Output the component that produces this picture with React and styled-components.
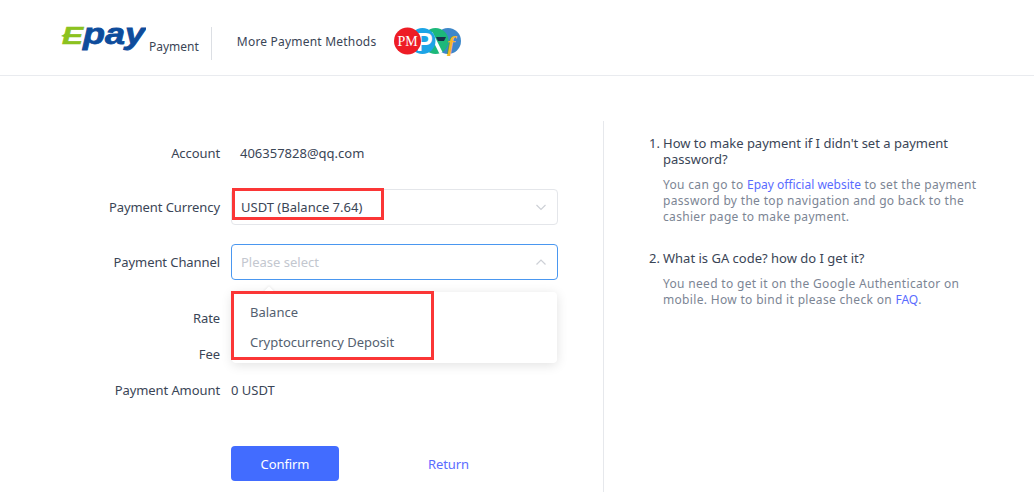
import React from "react";
import styled, { createGlobalStyle } from "styled-components";

const GlobalStyle = createGlobalStyle`
  html, body {
    margin: 0;
    padding: 0;
    background: #fff;
    font-family: "Noto Sans", "Open Sans", sans-serif;
    font-size: 13px;
    overflow: hidden;
  }
`;

const Page = styled.div`
  position: relative;
  width: 1034px;
  height: 492px;
  overflow: hidden;
  color: #3a4556;
`;

const Header = styled.header`
  height: 75px;
  border-bottom: 1px solid #e9ebef;
  display: flex;
  align-items: center;
  padding-left: 60px;
`;

const Brand = styled.div`
  display: flex;
  align-items: flex-end;
  height: 33px;
  margin-top: 12px;
  padding-right: 12px;
  padding-bottom: 5px;
  box-sizing: border-box;
  border-right: 1px solid #dcdfe4;
`;

const LogoSvg = styled.svg`
  display: block;
  align-self: flex-start;
  margin-top: -12px;
`;

const BrandName = styled.span`
  font-size: 12px;
  line-height: 16px;
  margin-left: 3px;
  color: #3a4556;
`;

const MoreMethods = styled.span`
  margin: 7px 0 0 25px;
  font-size: 12px;
  letter-spacing: 0.2px;
  color: #3a4556;
`;

const MethodIcons = styled.svg`
  margin: 6px 0 0 18px;
  display: block;
`;

const Main = styled.main`
  display: flex;
  padding-top: 45px;
`;

const FormColumn = styled.section`
  width: 604px;
  height: 371px;
  box-sizing: border-box;
  border-right: 1px solid #e6e8ec;
  padding-top: 14px;
`;

const Row = styled.div`
  display: flex;
  align-items: center;
  height: ${(p) => p.$height || 36}px;
  margin-bottom: ${(p) => p.$gap || 0}px;
`;

const Label = styled.span`
  width: 220px;
  text-align: right;
  flex-shrink: 0;
  letter-spacing: -0.08px;
`;

const Value = styled.span`
  margin-left: ${(p) => p.$inset}px;
`;

const Field = styled.div`
  position: relative;
  width: 327px;
  height: 36px;
  margin-left: 11px;
  box-sizing: border-box;
  border: 1px solid ${(p) => (p.$open ? "#4a97f0" : "#e4e6ea")};
  border-radius: 4px;
  display: flex;
  align-items: center;
  justify-content: space-between;
  padding: 0 9px;
  color: ${(p) => (p.$placeholder ? "#c3c7cf" : "#3a4556")};
`;

const Menu = styled.div`
  position: absolute;
  top: 47px;
  left: 0;
  width: 325px;
  height: 71px;
  background: #fff;
  border-radius: 4px;
  box-shadow: 0 2px 12px rgba(0, 0, 0, 0.12);
  padding: 5px 0;
  box-sizing: border-box;
  z-index: 2;

  &::before {
    content: "";
    position: absolute;
    top: -4px;
    left: 33px;
    width: 8px;
    height: 8px;
    background: #fff;
    transform: rotate(45deg);
    box-shadow: -1px -1px 2px rgba(0, 0, 0, 0.06);
  }
`;

const MenuItem = styled.div`
  position: relative;
  height: 30px;
  line-height: 30px;
  padding-left: 18px;
  color: #545f70;
`;

const Actions = styled.div`
  display: flex;
  align-items: center;
  margin: 38px 0 0 231px;
`;

const ConfirmButton = styled.button`
  width: 108px;
  height: 35px;
  border: none;
  border-radius: 4px;
  background: #426cff;
  color: #fff;
  font: inherit;
  letter-spacing: -0.1px;
`;

const ReturnLink = styled.a`
  margin-left: 89px;
  color: #5a6cff;
  letter-spacing: -0.1px;
`;

const Faq = styled.ol`
  margin: 0;
  padding: 14px 0 0 59px;
  width: 322px;
  box-sizing: content-box;
  list-style: none;
`;

const FaqItem = styled.li`
  position: relative;
  margin-bottom: 25px;
`;

const ItemNumber = styled.span`
  position: absolute;
  left: -14px;
  top: 0;
  line-height: 16px;
  color: #3a4556;
`;

const Question = styled.div`
  line-height: 16px;
  color: #3a4556;
`;

const Answer = styled.p`
  margin: 10px 0 0;
  line-height: 16px;
  font-size: 12px;
  letter-spacing: 0.32px;
  color: #7c8594;
`;

const Link = styled.a`
  color: #5a6cff;
  letter-spacing: 0;
`;

const Highlight = styled.div`
  position: absolute;
  left: ${(p) => p.$x}px;
  top: ${(p) => p.$y}px;
  width: ${(p) => p.$w}px;
  height: ${(p) => p.$h}px;
  box-sizing: border-box;
  border: 3px solid #fb3636;
  z-index: 3;
`;

function EpayLogo() {
  return (
    <LogoSvg width="86" height="40" viewBox="0 0 86 40">
      <polygon points="1,21 8,17 7,23" fill="#8cc21f" />
      <text
        x="2"
        y="29"
        fontFamily="Liberation Sans"
        fontWeight="700"
        fontStyle="italic"
        fontSize="23"
        textLength="21"
        lengthAdjust="spacingAndGlyphs"
        fill="#8cc21f"
        stroke="#8cc21f"
        strokeWidth="0.6"
      >
        E
      </text>
      <text
        x="23"
        y="29"
        fontFamily="Liberation Sans"
        fontWeight="700"
        fontStyle="italic"
        fontSize="30"
        textLength="62"
        lengthAdjust="spacingAndGlyphs"
        fill="#0e4c9c"
        stroke="#0e4c9c"
        strokeWidth="0.8"
      >
        pay
      </text>
    </LogoSvg>
  );
}

function Methods() {
  return (
    <MethodIcons width="68" height="30" viewBox="0 0 68 30">
      <circle cx="54" cy="15" r="13" fill="#3d87c9" />
      <circle cx="41.5" cy="15" r="13" fill="#1cb87a" />
      <path d="M37 7 L47 27" stroke="#fff" strokeWidth="3.5" fill="none" />
      <path d="M42 11 H52 L50 15 H44 Z" fill="#16324a" />
      <text x="53" y="26" fontFamily="Liberation Serif" fontWeight="700" fontStyle="italic" fontSize="24" fill="#f4b82a">
        f
      </text>
      <circle cx="28.5" cy="15" r="13" fill="#1ca4e6" />
      <text x="22" y="25" fontFamily="Liberation Sans" fontWeight="700" fontSize="25" fill="#fff">
        P
      </text>
      <circle cx="13.5" cy="15" r="13.5" fill="#ee1c25" />
      <text x="13.5" y="20" textAnchor="middle" fontFamily="Liberation Serif" fontSize="14" fill="#fff">
        PM
      </text>
    </MethodIcons>
  );
}

function Chevron({ up }) {
  return (
    <svg width="14" height="14" viewBox="0 0 14 14" fill="none" stroke="#cdd0d6" strokeWidth="1.2">
      <path d={up ? "M2.5 9.5 L7 5 L11.5 9.5" : "M2.5 5 L7 9.5 L11.5 5"} />
    </svg>
  );
}

export default function App() {
  return (
    <Page>
      <GlobalStyle />
      <Header>
        <Brand>
          <EpayLogo />
          <BrandName>Payment</BrandName>
        </Brand>
        <MoreMethods>More Payment Methods</MoreMethods>
        <Methods />
      </Header>
      <Main>
        <FormColumn>
          <Row $gap={18}>
            <Label>Account</Label>
            <Value $inset={20}>406357828@qq.com</Value>
          </Row>
          <Row $gap={19}>
            <Label>Payment Currency</Label>
            <Field>
              USDT (Balance 7.64)
              <Chevron />
            </Field>
          </Row>
          <Row $gap={20}>
            <Label>Payment Channel</Label>
            <Field $open $placeholder>
              Please select
              <Chevron up />
              <Menu>
                <MenuItem>Balance</MenuItem>
                <MenuItem>Cryptocurrency Deposit</MenuItem>
              </Menu>
            </Field>
          </Row>
          <Row>
            <Label>Rate</Label>
          </Row>
          <Row>
            <Label>Fee</Label>
          </Row>
          <Row>
            <Label>Payment Amount</Label>
            <Value $inset={11}>0 USDT</Value>
          </Row>
          <Actions>
            <ConfirmButton>Confirm</ConfirmButton>
            <ReturnLink>Return</ReturnLink>
          </Actions>
        </FormColumn>
        <Faq>
          <FaqItem>
            <ItemNumber>1.</ItemNumber>
            <Question>How to make payment if I didn't set a payment password?</Question>
            <Answer>
              You can go to <Link>Epay official website</Link> to set the payment password by the top navigation and go
              back to the cashier page to make payment.
            </Answer>
          </FaqItem>
          <FaqItem>
            <ItemNumber>2.</ItemNumber>
            <Question>What is GA code? how do I get it?</Question>
            <Answer>
              You need to get it on the Google Authenticator on mobile. How to bind it please check on <Link>FAQ</Link>.
            </Answer>
          </FaqItem>
        </Faq>
      </Main>
      <Highlight $x={232} $y={188} $w={152} $h={32} />
      <Highlight $x={231} $y={291} $w={203} $h={69} />
    </Page>
  );
}
